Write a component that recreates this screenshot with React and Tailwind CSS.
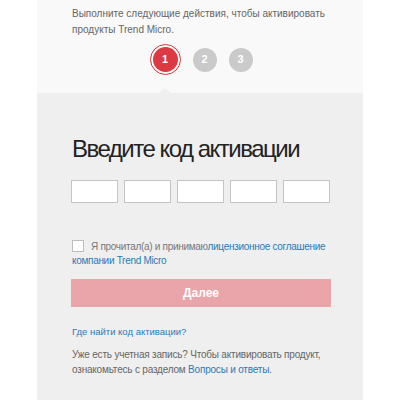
export default function App() {
  return (
    <div className="w-[400px] h-[400px] bg-white overflow-hidden" style={{ fontFamily: '"Liberation Sans", Arial, sans-serif' }}>
      <div className="mx-[37px] w-[326px] h-full flex flex-col">
        {/* top: intro + steps */}
        <div className="bg-[#f9f9f9] h-[93px] px-[35px] pt-[6px] relative">
          <p className="text-[10px] leading-[16px] text-[#666] pr-[2px]">
            Выполните следующие действия, чтобы активировать продукты Trend Micro.
          </p>
          <div className="flex items-center justify-center gap-[12px] mt-[6px] pl-[2px]">
            <div className="w-[31px] h-[31px] rounded-full border border-[#d9363e] flex items-center justify-center">
              <div className="w-[25px] h-[25px] rounded-full bg-[#dc3a42] text-white text-[11px] font-bold flex items-center justify-center">1</div>
            </div>
            <div className="w-[24px] h-[24px] rounded-full bg-[#cacaca] text-white text-[11px] font-bold flex items-center justify-center">2</div>
            <div className="w-[24px] h-[24px] rounded-full bg-[#cacaca] text-white text-[11px] font-bold flex items-center justify-center">3</div>
          </div>
          <div className="absolute left-[122px] bottom-0 w-0 h-0 border-l-[6px] border-r-[6px] border-b-[5px] border-l-transparent border-r-transparent border-b-[#efefef]" />
        </div>
        {/* form */}
        <div className="bg-[#efefef] flex-1 pl-[35px] pr-[30px] pt-[42px]">
          <h1 className="text-[24px] leading-[28px] text-[#222] tracking-[-1.5px]">Введите код активации</h1>
          <div className="flex gap-[6px] mt-[17px] -ml-[1px]">
            {[0, 1, 2, 3, 4].map((i) => (
              <input key={i} className="w-[47px] h-[23px] bg-white border border-[#c4c4c4] outline-none" />
            ))}
          </div>
          <div className="mt-[37px] text-[10px] leading-[14px] text-[#777] tracking-[-0.3px]">
            <span className="inline-block w-[12px] h-[12px] bg-white border border-[#bdbdbd] align-[-2px] mr-[7px]" />
            Я прочитал(а) и принимаю
            <a className="text-[#2a7ab8]">лицензионное соглашение компании Trend Micro</a>
          </div>
          <button className="mt-[11px] -ml-[1px] w-[260px] h-[28px] bg-[#e9a5a9] text-white text-[12px] font-bold">Далее</button>
          <a className="block mt-[18px] text-[9.5px] leading-[14px] text-[#2a7ab8]">Где найти код активации?</a>
          <p className="mt-[8px] text-[10px] leading-[15px] text-[#666] tracking-[-0.2px]">
            Уже есть учетная запись? Чтобы активировать продукт, ознакомьтесь с разделом{' '}
            <a className="text-[#2a7ab8]">Вопросы и ответы</a>.
          </p>
        </div>
      </div>
    </div>
  );
}
